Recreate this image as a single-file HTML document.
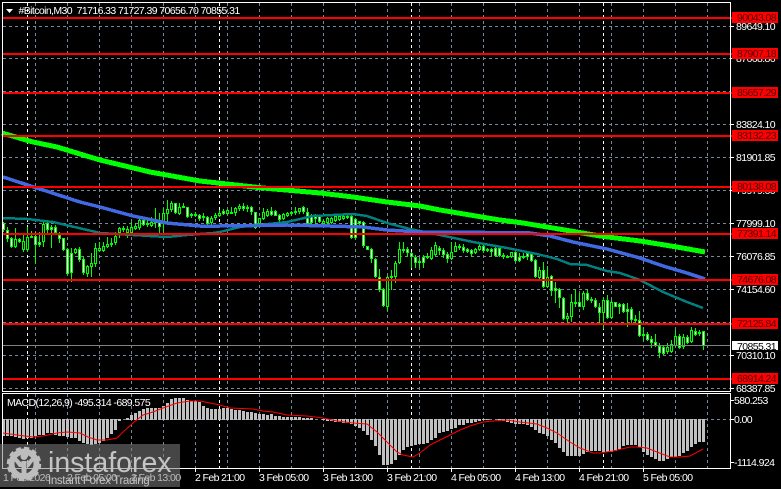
<!DOCTYPE html>
<html><head><meta charset="utf-8"><style>
html,body{margin:0;padding:0;background:#000;width:781px;height:489px;overflow:hidden}
svg{display:block}
text{font-family:"Liberation Sans",sans-serif;font-size:10.5px;fill:#fff;letter-spacing:-.6px}
.r{fill:#500000}
</style></head><body>
<svg width="781" height="489" viewBox="0 0 781 489" xmlns="http://www.w3.org/2000/svg" shape-rendering="crispEdges">
<rect width="781" height="489" fill="#000"/>
<!-- grid -->
<path fill="none" stroke="#77889a" stroke-dasharray="3 3" d="M35.500 3V391M67.500 3V391M99.500 3V391M131.500 3V391M163.500 3V391M195.500 3V391M227.500 3V391M259.500 3V391M291.500 3V391M323.500 3V391M355.500 3V391M387.500 3V391M419.500 3V391M451.500 3V391M483.500 3V391M515.500 3V391M547.500 3V391M579.500 3V391M611.500 3V391M643.500 3V391M675.500 3V391M707.500 3V391M35.500 394V468M67.500 394V468M99.500 394V468M131.500 394V468M163.500 394V468M195.500 394V468M227.500 394V468M259.500 394V468M291.500 394V468M323.500 394V468M355.500 394V468M387.500 394V468M419.500 394V468M451.500 394V468M483.500 394V468M515.500 394V468M547.500 394V468M579.500 394V468M611.500 394V468M643.500 394V468M675.500 394V468M707.500 394V468M3 26.500H730M3 58.500H730M3 91.500H730M3 124.500H730M3 157.500H730M3 190.500H730M3 223.500H730M3 256.500H730M3 289.500H730M3 322.500H730M3 355.500H730M3 388.500H730M3 419.500H730"/>
<path fill="none" stroke="#fff" stroke-dasharray="3 3" d="M27.500 3V391M219.500 3V391M411.500 3V391M603.500 3V391M27.500 394V468M219.500 394V468M411.500 394V468M603.500 394V468"/>
<!-- candle wicks -->
<path fill="none" stroke="#00ff00" d="M3.500 222V232M7.500 227V242M11.500 237V248M15.500 228V248M19.500 238V243M23.500 233V252M27.500 227V252M31.500 231V238M35.500 232V264M39.500 232V247M43.500 222V247M47.500 222V233M51.500 225V248M55.500 225V233M59.500 232V243M63.500 238V251M67.500 248V275M71.500 248V282M75.500 248V254M79.500 247V262M83.500 257V275M87.500 265V277M91.500 253V277M95.500 243V267M99.500 242V252M103.500 242V252M107.500 237V248M111.500 238V247M115.500 232V245M119.500 227V238M123.500 226V232M127.500 226V238M131.500 222V234M135.500 223V230M139.500 218V230M143.500 217V226M147.500 220V227M151.500 217V227M155.500 208V228M159.500 213V233M163.500 208V233M167.500 200V223M171.500 201V212M175.500 203V214M179.500 203V215M183.500 203V208M187.500 207V218M191.500 213V218M195.500 212V217M199.500 214V221M203.500 213V221M207.500 216V225M211.500 216V225M215.500 213V220M219.500 210V217M223.500 209V215M227.500 209V215M231.500 207V214M235.500 207V216M239.500 204V211M243.500 203V211M247.500 205V212M251.500 206V215M255.500 212V229M259.500 218V228M263.500 208V220M267.500 209V217M271.500 207V216M275.500 210V216M279.500 214V222M283.500 213V220M287.500 212V217M291.500 211V216M295.500 207V215M299.500 208V214M303.500 206V214M307.500 208V224M311.500 214V226M315.500 214V225M319.500 215V223M323.500 220V225M327.500 217V224M331.500 217V224M335.500 215V222M339.500 215V221M343.500 215V220M347.500 215V219M351.500 215V239M355.500 218V240M359.500 221V226M363.500 221V248M367.500 246V250M371.500 248V263M375.500 258V278M379.500 269V292M383.500 288V307M387.500 276V311M391.500 270V290M395.500 261V283M399.500 242V264M403.500 242V253M407.500 247V257M411.500 252V268M415.500 255V268M419.500 258V268M423.500 255V268M427.500 253V259M431.500 247V260M435.500 242V256M439.500 246V255M443.500 248V258M447.500 252V263M451.500 242V260M455.500 242V252M459.500 244V250M463.500 244V253M467.500 248V253M471.500 249V257M475.500 248V254M479.500 244V251M483.500 244V253M487.500 248V252M491.500 248V256M495.500 247V257M499.500 247V257M503.500 253V259M507.500 255V258M511.500 252V258M515.500 252V262M519.500 253V262M523.500 253V259M527.500 253V260M531.500 252V262M535.500 259V278M539.500 267V280M543.500 262V288M547.500 266V288M551.500 275V296M555.500 282V303M559.500 288V308M563.500 297V320M567.500 313V323M571.500 294V322M575.500 289V307M579.500 293V307M583.500 291V310M587.500 290V301M591.500 297V303M595.500 298V308M599.500 303V323M603.500 297V329M607.500 295V319M611.500 300V319M615.500 302V307M619.500 303V314M623.500 303V313M627.500 303V327M631.500 307V323M635.500 315V323M639.500 311V337M643.500 327V341M647.500 332V341M651.500 336V348M655.500 334V347M659.500 343V358M663.500 345V355M667.500 343V354M671.500 340V353M675.500 330V347M679.500 334V349M683.500 334V349M687.500 335V344M691.500 327V343M695.500 328V336M699.500 330V336M703.500 331V350"/>
<!-- bullish candles: black body -->
<path fill="#000" stroke="#00ff00" d="M14.500 239.500h2v7h-2zM22.500 241.500h2v8h-2zM26.500 237.500h2v12h-2zM42.500 224.500h2v17h-2zM74.500 249.500h2v3h-2zM86.500 266.500h2v7h-2zM90.500 263.500h2v3h-2zM94.500 248.500h2v15h-2zM98.500 248.500h2v2h-2zM102.500 246.500h2v4h-2zM106.500 244.500h2v2h-2zM110.500 243.500h2v1h-2zM114.500 236.500h2v6h-2zM118.500 228.500h2v4h-2zM126.500 229.500h2v3h-2zM130.500 227.500h2v5h-2zM134.500 226.500h2v2h-2zM138.500 220.500h2v7h-2zM146.500 223.500h2v1h-2zM150.500 222.500h2v3h-2zM162.500 213.500h2v9h-2zM166.500 209.500h2v4h-2zM170.500 203.500h2v6h-2zM178.500 207.500h2v6h-2zM194.500 214.500h2v1h-2zM210.500 218.500h2v4h-2zM214.500 215.500h2v2h-2zM218.500 213.500h2v2h-2zM226.500 210.500h2v3h-2zM230.500 212.500h2v1h-2zM234.500 208.500h2v4h-2zM238.500 206.500h2v2h-2zM258.500 218.500h2v5h-2zM262.500 212.500h2v6h-2zM266.500 211.500h2v4h-2zM282.500 214.500h2v4h-2zM286.500 213.500h2v2h-2zM290.500 212.500h2v1h-2zM294.500 211.500h2v1h-2zM298.500 208.500h2v3h-2zM322.500 221.500h2v2h-2zM326.500 218.500h2v4h-2zM330.500 218.500h2v4h-2zM334.500 216.500h2v4h-2zM338.500 216.500h2v3h-2zM342.500 216.500h2v2h-2zM386.500 277.500h2v29h-2zM394.500 263.500h2v13h-2zM398.500 249.500h2v13h-2zM430.500 250.500h2v8h-2zM434.500 245.500h2v9h-2zM450.500 252.500h2v6h-2zM454.500 246.500h2v5h-2zM474.500 249.500h2v3h-2zM478.500 246.500h2v3h-2zM510.500 252.500h2v4h-2zM538.500 270.500h2v7h-2zM546.500 277.500h2v9h-2zM566.500 316.500h2v2h-2zM570.500 302.500h2v14h-2zM582.500 293.500h2v13h-2zM602.500 300.500h2v12h-2zM610.500 302.500h2v15h-2zM666.500 347.500h2v4h-2zM670.500 344.500h2v7h-2zM674.500 336.500h2v9h-2zM682.500 337.500h2v9h-2zM690.500 330.500h2v11h-2z"/>
<!-- bearish candles: white body -->
<path fill="#fff" stroke="#00ff00" d="M2.500 223.500h2v6h-2zM6.500 230.500h2v8h-2zM10.500 238.500h2v8h-2zM18.500 239.500h2v2h-2zM30.500 236.500h2v1h-2zM34.500 236.500h2v8h-2zM38.500 242.500h2v2h-2zM46.500 223.500h2v6h-2zM50.500 227.500h2v2h-2zM54.500 227.500h2v5h-2zM58.500 235.500h2v3h-2zM62.500 238.500h2v11h-2zM66.500 249.500h2v24h-2zM70.500 253.500h2v19h-2zM78.500 249.500h2v10h-2zM82.500 259.500h2v13h-2zM122.500 228.500h2v1h-2zM142.500 220.500h2v4h-2zM154.500 220.500h2v2h-2zM158.500 222.500h2v4h-2zM174.500 203.500h2v9h-2zM182.500 206.500h2v1h-2zM186.500 207.500h2v9h-2zM190.500 214.500h2v1h-2zM198.500 215.500h2v3h-2zM202.500 216.500h2v1h-2zM206.500 217.500h2v6h-2zM222.500 211.500h2v2h-2zM242.500 206.500h2v2h-2zM246.500 207.500h2v1h-2zM250.500 207.500h2v4h-2zM254.500 212.500h2v15h-2zM270.500 211.500h2v3h-2zM274.500 211.500h2v4h-2zM278.500 215.500h2v4h-2zM302.500 207.500h2v4h-2zM306.500 212.500h2v11h-2zM310.500 215.500h2v7h-2zM314.500 216.500h2v2h-2zM318.500 216.500h2v5h-2zM346.500 216.500h2v1h-2zM350.500 216.500h2v21h-2zM354.500 219.500h2v18h-2zM358.500 221.500h2v2h-2zM362.500 222.500h2v23h-2zM366.500 246.500h2v3h-2zM370.500 249.500h2v9h-2zM374.500 259.500h2v17h-2zM378.500 277.500h2v12h-2zM382.500 289.500h2v16h-2zM390.500 276.500h2v1h-2zM402.500 249.500h2v1h-2zM406.500 249.500h2v3h-2zM410.500 253.500h2v3h-2zM414.500 257.500h2v5h-2zM418.500 261.500h2v1h-2zM422.500 257.500h2v5h-2zM426.500 256.500h2v1h-2zM438.500 248.500h2v2h-2zM442.500 250.500h2v4h-2zM446.500 254.500h2v4h-2zM458.500 246.500h2v1h-2zM462.500 247.500h2v3h-2zM466.500 249.500h2v2h-2zM470.500 250.500h2v3h-2zM482.500 246.500h2v4h-2zM486.500 249.500h2v1h-2zM490.500 249.500h2v2h-2zM494.500 248.500h2v7h-2zM498.500 248.500h2v7h-2zM502.500 255.500h2v1h-2zM506.500 256.500h2v1h-2zM514.500 252.500h2v8h-2zM518.500 257.500h2v3h-2zM522.500 256.500h2v1h-2zM526.500 253.500h2v3h-2zM530.500 254.500h2v6h-2zM534.500 260.500h2v16h-2zM542.500 270.500h2v16h-2zM550.500 276.500h2v14h-2zM554.500 288.500h2v2h-2zM558.500 289.500h2v8h-2zM562.500 298.500h2v20h-2zM574.500 302.500h2v1h-2zM578.500 302.500h2v4h-2zM586.500 293.500h2v6h-2zM590.500 299.500h2v1h-2zM594.500 300.500h2v6h-2zM598.500 307.500h2v5h-2zM606.500 300.500h2v17h-2zM614.500 302.500h2v4h-2zM618.500 304.500h2v2h-2zM622.500 304.500h2v7h-2zM626.500 309.500h2v2h-2zM630.500 309.500h2v10h-2zM634.500 319.500h2v1h-2zM638.500 320.500h2v15h-2zM642.500 334.500h2v1h-2zM646.500 334.500h2v5h-2zM650.500 339.500h2v3h-2zM654.500 342.500h2v3h-2zM658.500 346.500h2v6h-2zM662.500 347.500h2v6h-2zM678.500 336.500h2v11h-2zM686.500 337.500h2v5h-2zM694.500 331.500h2v3h-2zM698.500 332.500h2v1h-2zM702.500 331.500h2v14h-2z"/>
<!-- moving averages -->
<path fill="none" stroke="#008080" stroke-width="2.500" d="M3 218L27 219L53 222L83 229L100 233L133 235L167 237L187 235L213 233L220 232L240 227L287 222L313 216L353 214L367 216L387 223L410 229L440 235L473 242L507 248L537 254L557 259L570 264L587 265L607 271L620 273L640 280L663 292L687 302L703 308"/>
<path fill="none" stroke="#4169e1" stroke-width="3.500" d="M3 177L43 190L80 202L100 207L133 216L167 223L200 226L220 226L287 225L330 226L363 227L387 230L420 232L440 232L530 233L550 236L573 242L607 249L640 258L663 266L687 273L705 279"/>
<path fill="none" stroke="#00ff00" stroke-width="5" d="M2 133L33 142L57 147L80 154L100 160L150 172L200 181L263 188L320 193L353 197L387 202L420 206L440 210L500 220L523 223L553 228L600 236L640 241L677 247L705 252"/>
<!-- price line and levels -->
<rect x="3" y="345" width="727" height="1" fill="#808080"/>
<g fill="#ff0000">
<rect x="3" y="17" width="729" height="2"/><rect x="3" y="53" width="729" height="2"/><rect x="3" y="92" width="729" height="2"/><rect x="3" y="135" width="729" height="2"/><rect x="3" y="186" width="729" height="2"/><rect x="3" y="233" width="729" height="2"/><rect x="3" y="279" width="729" height="2"/><rect x="3" y="323" width="729" height="2"/><rect x="3" y="378" width="729" height="2"/>
</g>
<!-- MACD -->
<path fill="none" stroke="#c0c0c0" stroke-width="3" d="M3.500 419V436M7.500 419V436M11.500 419V436M15.500 419V437M19.500 419V438M23.500 419V439M27.500 419V438M31.500 419V438M35.500 419V436M39.500 419V435M43.500 419V435M47.500 419V433M51.500 419V433M55.500 419V435M59.500 419V436M63.500 419V436M67.500 419V437M71.500 419V438M75.500 419V438M79.500 419V441M83.500 419V443M87.500 419V444M91.500 419V445M95.500 419V444M99.500 419V443M103.500 419V441M107.500 419V438M111.500 419V434M115.500 419V430M119.500 419V421M127.500 420V418M131.500 420V415M135.500 420V413M139.500 420V411M143.500 420V409M147.500 420V408M151.500 420V408M155.500 420V408M159.500 420V408M163.500 420V406M167.500 420V403M171.500 420V399M175.500 420V398M179.500 420V398M183.500 420V398M187.500 420V400M191.500 420V401M195.500 420V401M199.500 420V402M203.500 420V406M207.500 420V408M211.500 420V409M215.500 420V409M219.500 420V409M223.500 420V408M227.500 420V408M231.500 420V409M235.500 420V410M239.500 420V410M243.500 420V411M247.500 420V412M251.500 420V412M255.500 420V413M259.500 420V414M263.500 420V414M267.500 420V415M271.500 420V414M275.500 420V416M279.500 420V416M283.500 420V417M287.500 420V417M291.500 420V417M295.500 420V417M299.500 420V417M303.500 420V418M307.500 420V418M311.500 420V418M323.500 419V420M327.500 419V421M331.500 419V421M335.500 419V422M339.500 419V422M343.500 419V423M347.500 419V423M351.500 419V424M355.500 419V426M359.500 419V428M363.500 419V431M367.500 419V435M371.500 419V440M375.500 419V446M379.500 419V455M383.500 419V465M387.500 419V465M391.500 419V464M395.500 419V460M399.500 419V455M403.500 419V450M407.500 419V447M411.500 419V446M415.500 419V445M419.500 419V444M423.500 419V444M427.500 419V443M431.500 419V440M435.500 419V438M439.500 419V433M443.500 419V432M447.500 419V431M451.500 419V429M455.500 419V428M459.500 419V425M463.500 419V425M467.500 419V423M471.500 419V423M475.500 419V422M479.500 419V421M483.500 419V420M487.500 419V420M499.500 419V421M503.500 419V421M507.500 419V422M511.500 419V423M515.500 419V424M519.500 419V424M523.500 419V424M527.500 419V425M531.500 419V427M535.500 419V430M539.500 419V433M543.500 419V434M547.500 419V436M551.500 419V440M555.500 419V443M559.500 419V448M563.500 419V452M567.500 419V456M571.500 419V456M575.500 419V456M579.500 419V456M583.500 419V454M587.500 419V452M591.500 419V451M595.500 419V451M599.500 419V451M603.500 419V452M607.500 419V452M611.500 419V452M615.500 419V451M619.500 419V449M623.500 419V446M627.500 419V445M631.500 419V445M635.500 419V445M639.500 419V447M643.500 419V452M647.500 419V455M651.500 419V457M655.500 419V459M659.500 419V461M663.500 419V461M667.500 419V459M671.500 419V457M675.500 419V457M679.500 419V456M683.500 419V453M687.500 419V451M691.500 419V447M695.500 419V444M699.500 419V442M703.500 419V442"/>
<path fill="none" stroke="#ff0000" stroke-width="1" d="M3 433L17 435L33 437L43 436L57 433L67 432L80 433L88 437L97 440L107 440L117 438L123 432L133 423L143 415L153 412L163 408L177 403L190 401L200 401L210 403L220 405L230 408L253 409L263 411L273 412L287 415L307 416L323 418L337 421L353 423L367 424L377 432L387 442L397 452L403 455L413 457L420 453L430 445L440 440L450 435L460 430L470 426L483 422L493 421L507 420L520 422L537 424L547 428L557 433L570 442L580 448L593 453L600 453L613 451L630 447L637 447L647 448L657 452L670 457L680 457L690 456L703 449" shape-rendering="auto"/>
<!-- frames -->
<g fill="#fff">
<rect x="2" y="2" width="729" height="1"/><rect x="2" y="2" width="1" height="390"/><rect x="730" y="2" width="1" height="390"/><rect x="2" y="391" width="729" height="1"/>
<rect x="2" y="393" width="729" height="1"/><rect x="2" y="393" width="1" height="75"/><rect x="730" y="393" width="1" height="75"/><rect x="2" y="468" width="729" height="1"/>
</g>
<path fill="none" stroke="#fff" d="M731 26.500h3M731 58.500h3M731 124.500h3M731 157.500h3M731 190.500h3M731 223.500h3M731 256.500h3M731 289.500h3M731 355.500h3M731 388.500h3M731 400.500h3M731 419.500h3M731 462.500h3M67.500 469v3M131.500 469v3M195.500 469v3M259.500 469v3M323.500 469v3M387.500 469v3M451.500 469v3M515.500 469v3M579.500 469v3M643.500 469v3"/>
<!-- axis labels -->
<g shape-rendering="auto">
<path d="M6 9h7l-3.500 4z" fill="#fff"/>
<text x="18.500" y="14" xml:space="preserve">#Bitcoin,M30  71716.33 71727.39 70656.70 70855.31</text>
<text x="736" y="30">89649.10</text><text x="736" y="62">87668.86</text><text x="736" y="128">83824.10</text><text x="736" y="161">81901.85</text><text x="736" y="194">79979.60</text><text x="736" y="227">77999.10</text><text x="736" y="260">76076.85</text><text x="736" y="293">74154.60</text><text x="736" y="359">70310.10</text><text x="736" y="392">68387.85</text>
<text x="734" y="404">580.253</text><text x="734" y="423">0.00</text><text x="734" y="466">-1114.924</text>
<text x="7" y="406">MACD(12,26,9) -495.314 -689.575</text>
<g>
<rect x="732" y="12" width="46" height="11" fill="#f00"/><rect x="732" y="48" width="46" height="11" fill="#f00"/><rect x="732" y="87" width="46" height="11" fill="#f00"/><rect x="732" y="130" width="46" height="11" fill="#f00"/><rect x="732" y="181" width="46" height="11" fill="#f00"/><rect x="732" y="228" width="46" height="11" fill="#f00"/><rect x="732" y="274" width="46" height="11" fill="#f00"/><rect x="732" y="318" width="46" height="11" fill="#f00"/><rect x="732" y="373" width="46" height="11" fill="#f00"/>
<rect x="732" y="341" width="46" height="9" fill="#fff"/>
</g>
<text class="r" x="737" y="21">90043.08</text><text class="r" x="737" y="57">87907.18</text><text class="r" x="737" y="96">85657.29</text><text class="r" x="737" y="139">83132.23</text><text class="r" x="737" y="190">80138.08</text><text class="r" x="737" y="237">77391.14</text><text class="r" x="737" y="283">74676.08</text><text class="r" x="737" y="327">72125.84</text><text class="r" x="737" y="382">68914.24</text>
<text x="737" y="350" style="fill:#000">70855.31</text>
<text x="3" y="481">1 Feb 2026</text><text x="67" y="481">2 Feb 05:00</text><text x="131" y="481">2 Feb 13:00</text><text x="195" y="481">2 Feb 21:00</text><text x="259" y="481">3 Feb 05:00</text><text x="323" y="481">3 Feb 13:00</text><text x="387" y="481">3 Feb 21:00</text><text x="451" y="481">4 Feb 05:00</text><text x="515" y="481">4 Feb 13:00</text><text x="579" y="481">4 Feb 21:00</text><text x="643" y="481">5 Feb 05:00</text>
<!-- watermark -->
<rect x="0" y="444" width="180" height="43" fill="#808080" fill-opacity=".55"/>
<circle cx="24" cy="464" r="12.500" fill="none" stroke="#bdbdbd" stroke-width="6"/>
<circle cx="24" cy="464" r="15.500" fill="none" stroke="#bdbdbd" stroke-width="3.500" stroke-dasharray="5 3.110"/>
<circle cx="24" cy="456.500" r="3.500" fill="#bdbdbd"/>
<path d="M21.500 461h5v14h-5zM13 459l3-2 6 6v4h-3zM35 459l-3-2-6 6v4h3z" fill="#bdbdbd"/>
<text x="48" y="472" style="font-size:28.500px;fill:#c4c4c4;letter-spacing:0">instaforex</text>
<text x="48" y="484" style="font-size:11.500px;fill:#c4c4c4;letter-spacing:-.35px">Instant Forex Trading</text>
</g>
</svg>
</body></html>
